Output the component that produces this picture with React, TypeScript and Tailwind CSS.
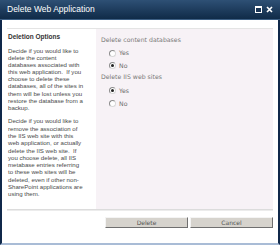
import React from "react";

const p1 = [
  "Decide if you would like to",
  "delete the content",
  "databases associated with",
  "this web application.  If you",
  "choose to delete these",
  "databases, all of the sites in",
  "them will be lost unless you",
  "restore the database from a",
  "backup.",
];
const p2 = [
  "Decide if you would like to",
  "remove the association of",
  "the IIS web site with this",
  "web application, or actually",
  "delete the IIS web site.  If",
  "you choose delete, all IIS",
  "metabase entries referring",
  "to these web sites will be",
  "deleted, even if other non-",
  "SharePoint applications are",
  "using them.",
];

function Radio({ checked, label, mt }: { checked: boolean; label: string; mt: string }) {
  return (
    <div className={`flex items-center h-[8px] pl-[8px] gap-[3px] ${mt}`}>
      <span className="w-[7px] h-[7px] rounded-full bg-white border border-[#8c8c8c] border-b-[#d8d8d8] border-r-[#d8d8d8] flex items-center justify-center">
        {checked && <span className="w-[3px] h-[3px] rounded-full bg-[#222]" />}
      </span>
      <span className="text-[6.2px] leading-[8px] text-[#6f6f6f]">{label}</span>
    </div>
  );
}

export default function App() {
  return (
    <div
      className="w-[280px] h-[245px] bg-white flex flex-col overflow-hidden"
      style={{ fontFamily: '"Liberation Sans", Arial, sans-serif' }}
    >
      <div className="h-[20px] shrink-0 bg-gradient-to-b from-[#2e5075] to-[#102b48] flex items-center justify-between pl-[7px] pr-[7px] border-b border-[#3d5f84]">
        <span className="text-white text-[8.5px] leading-none">Delete Web Application</span>
        <div className="flex items-center gap-[4px]">
          <svg width="7" height="7" viewBox="0 0 7 7">
            <rect x="0.5" y="0.5" width="6" height="6" fill="#1b3656" stroke="#ffffff" />
            <rect x="0" y="0" width="7" height="2" fill="#ffffff" />
          </svg>
          <svg width="7" height="7" viewBox="0 0 7 7">
            <path d="M1 1 L6 6 M6 1 L1 6" stroke="#ffffff" strokeWidth="1.6" />
          </svg>
        </div>
      </div>
      <div className="flex-1 flex flex-col border-l-2 border-r-2 border-b-2 border-l-[#10284a] border-r-[#10284a] border-b-[#a9bcd6] pl-[5px] pr-[5px]">
        <div className="mt-[8px] border-t border-[#e4e4e4] flex h-[181px]">
          <div className="w-[89px] shrink-0 pl-[1px] text-[#4a4a4a]">
            <div className="mt-[4px] font-bold text-[6.5px] leading-[8px] text-[#333]">Deletion Options</div>
            <div className="mt-[6px] text-[6.1px] leading-[7.1px]">
              {p1.map((l, i) => (
                <div key={i} className="whitespace-pre">{l}</div>
              ))}
            </div>
            <div className="mt-[6.5px] text-[6.1px] leading-[7.3px]">
              {p2.map((l, i) => (
                <div key={i} className="whitespace-pre">{l}</div>
              ))}
            </div>
          </div>
          <div
            className="flex-1 bg-[#f7f2f6] flex flex-col pl-[5px]"
            style={{ fontFamily: '"DejaVu Sans", Verdana, sans-serif' }}
          >
            <div className="mt-[7px] h-[8px] text-[6.2px] leading-[8px] text-[#7a7a7a]">Delete content databases</div>
            <Radio checked={false} label="Yes" mt="mt-[5px]" />
            <Radio checked={true} label="No" mt="mt-[4.5px]" />
            <div className="mt-[3.5px] h-[8px] text-[6.2px] leading-[8px] text-[#7a7a7a]">Delete IIS web sites</div>
            <Radio checked={true} label="Yes" mt="mt-[5.5px]" />
            <Radio checked={false} label="No" mt="mt-[5px]" />
          </div>
        </div>
        <div className="h-[2px] bg-[#dcdcdc] border-b border-[#ececec]" />
        <div
          className="mt-[6px] flex justify-end gap-[2px]"
          style={{ fontFamily: '"DejaVu Sans", Verdana, sans-serif' }}
        >
          <button className="w-[83px] h-[11px] bg-[#d6d3cd] border border-t-[#f4f4f4] border-l-[#f4f4f4] border-b-[#6f6f6f] border-r-[#6f6f6f] text-[6px] leading-none text-[#555]">
            Delete
          </button>
          <button className="w-[83px] h-[11px] bg-[#d6d3cd] border border-t-[#f4f4f4] border-l-[#f4f4f4] border-b-[#6f6f6f] border-r-[#6f6f6f] text-[6px] leading-none text-[#555]">
            Cancel
          </button>
        </div>
      </div>
    </div>
  );
}
